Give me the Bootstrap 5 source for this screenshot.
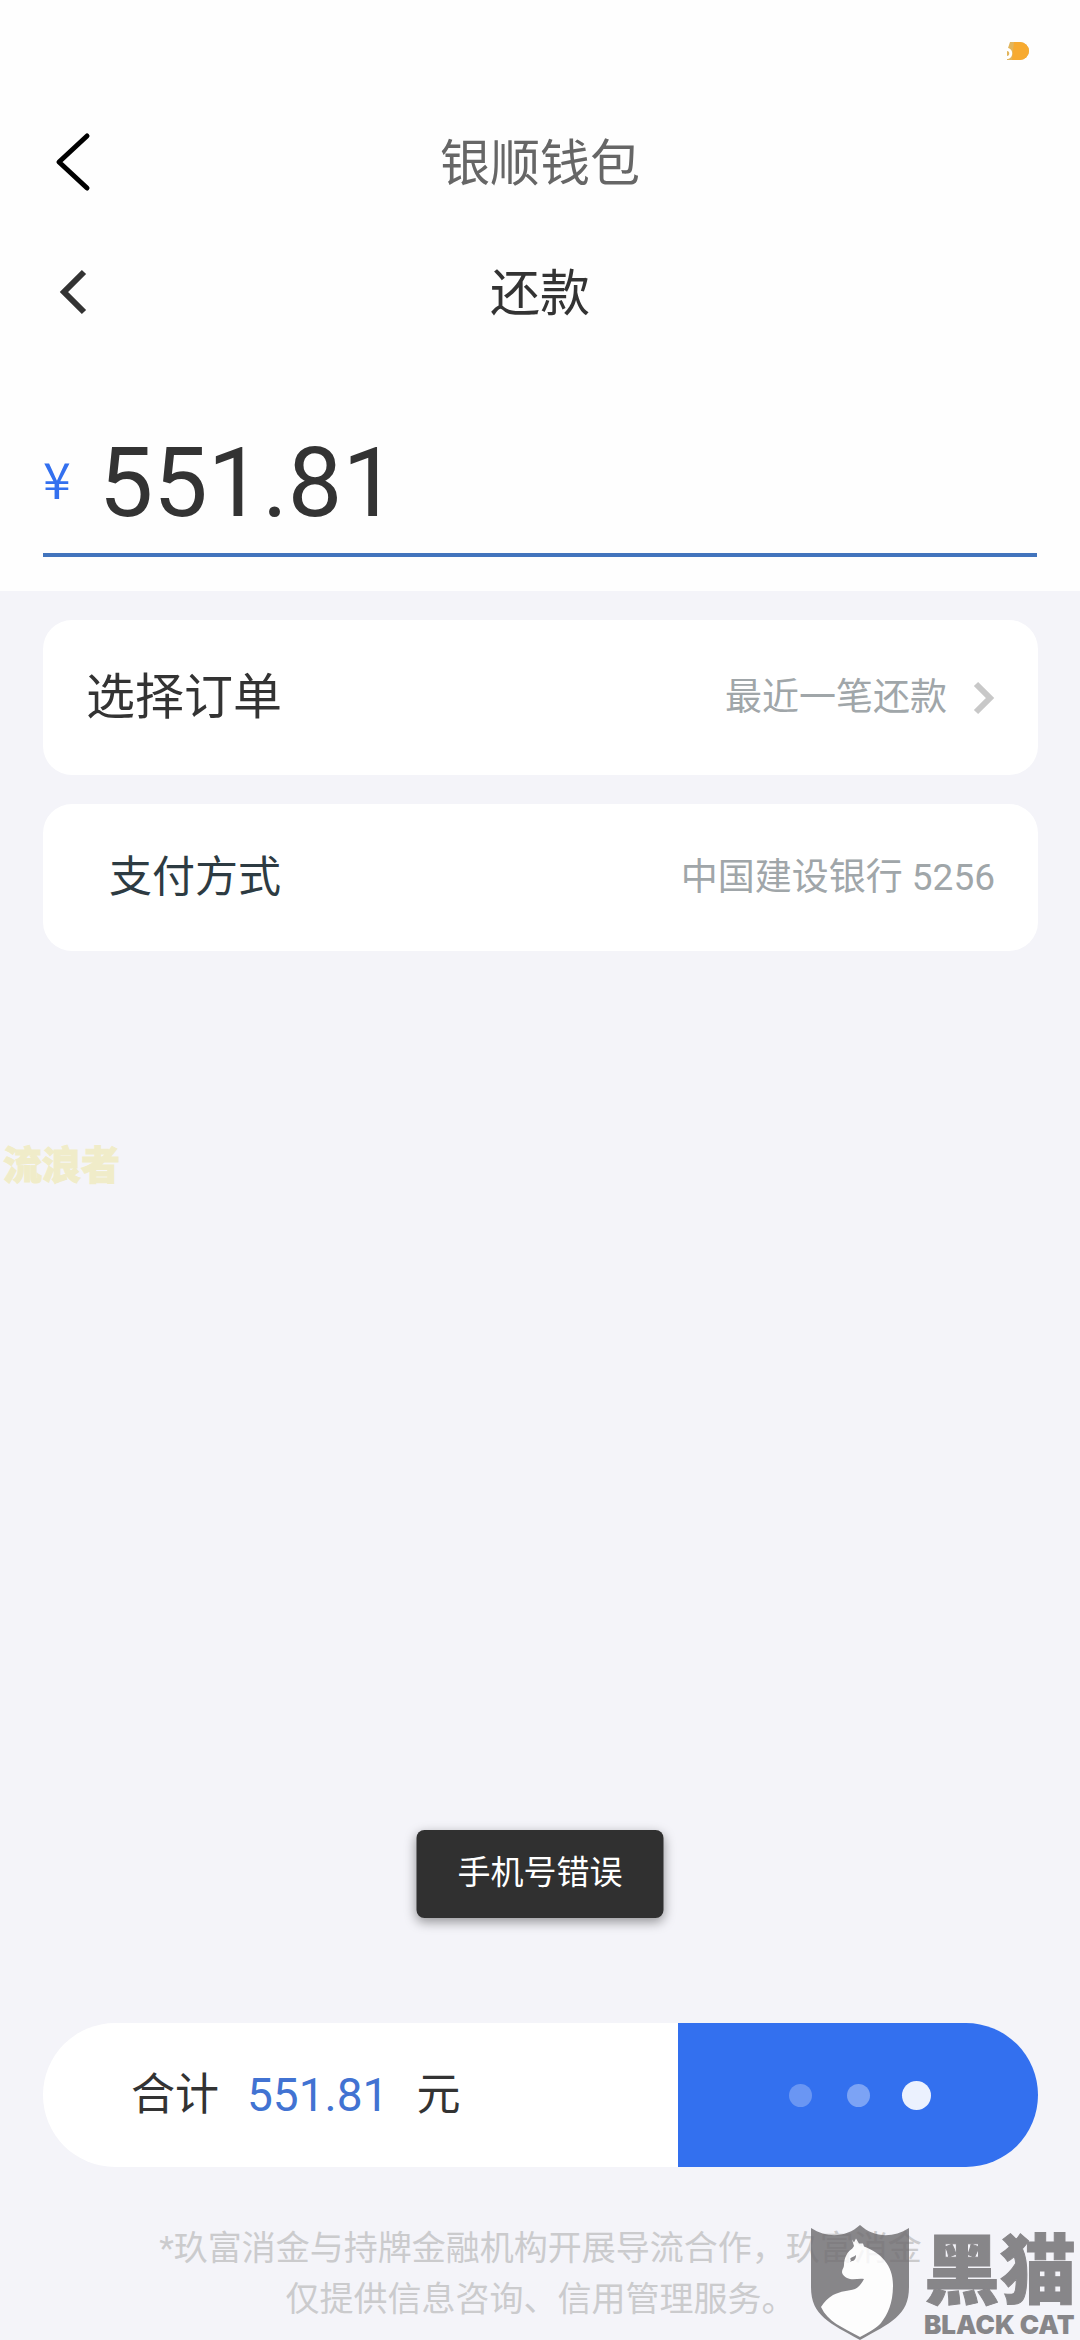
<!DOCTYPE html>
<html lang="zh-CN">
<head>
<meta charset="utf-8">
<meta name="viewport" content="width=device-width, initial-scale=1">
<title>还款</title>
<link href="https://cdn.jsdelivr.net/npm/bootstrap@5.3.0/dist/css/bootstrap.min.css" rel="stylesheet">
<style>
  :root { --brand: #3370ef; --ink: #333; --muted: #a0a6a9; --page: #f4f4f9; --gutter: 43px; }
  body { font-family: Roboto, "Noto Sans CJK SC", sans-serif; color: var(--ink); background: var(--page); line-height: 1.5; }
  .top-area { background: #fefefe; }
  .status-strip { height: 92px; padding: 10px 51px 0 0; }
  .app-bar { display: grid; grid-template-columns: 1fr auto 1fr; align-items: center; padding: 0 var(--gutter); }
  .app-bar-outer { height: 140px; color: #666; }
  .app-bar-inner { height: 120px; }
  .app-bar h1, .app-bar h2 { font-size: 50px; line-height: 60px; font-weight: 400; margin: 0; padding-top: 4px; }
  .back-btn { border: 0; background: none; padding: 0 0 0 12px; justify-self: start; display: flex; }
  .amount-area { padding: 59px var(--gutter) 34px; }
  .amount-field { height: 146px; border-bottom: 4px solid #4274bd; gap: 28px; }
  .amount-field label { font-family: "Noto Sans CJK SC", sans-serif; font-size: 50px; line-height: 60px; padding-bottom: 10px; color: var(--brand); }
  .amount-field input { font-size: 97px; line-height: 120px; height: 122px; color: var(--ink); border: 0; padding: 2px 0 0; background: none; min-width: 0; outline: 0; }
  .content-area { padding: 29px 42px 0 var(--gutter); gap: 29px; }
  .option-row { background: #fff; border: 0; border-radius: 29px; padding: 0 43px; color: var(--ink); text-align: left; }
  .option-order { height: 155px; font-size: 49px; }
  .option-pay { height: 147px; font-size: 43px; color: #2d3b42; padding-left: 66px; }
  .option-value { font-size: 37px; color: var(--muted); gap: 26px; }
  .stamp { left: 3px; top: 545px; font-size: 39px; line-height: 60px; font-weight: 900; color: #f0ecc9; text-shadow: 0 0 2px #fff; -webkit-text-stroke: 1px #f0ecc9; }
  .notice { left: 50%; bottom: 422px; transform: translateX(-50%); background: #303030; color: #fff; font-size: 33px; line-height: 50px; padding: 18px 41px 20px; border-radius: 8px; box-shadow: 0 4px 12px rgba(0,0,0,.4); white-space: nowrap; }
  .pay-area { padding: 0 42px 15px var(--gutter); }
  .pay-bar { height: 144px; border-radius: 72px; background: #fff; overflow: hidden; }
  .pay-total { font-size: 44px; padding-left: 88px; gap: 28px; }
  .pay-total output { font-size: 46px; color: #4273d2; }
  .pay-btn { width: 360px; border: 0; background: var(--brand); gap: 29px; }
  .load-dot { width: 23px; height: 23px; margin: 0 3px; border-radius: 50%; background: #fff; opacity: .27; }
  .load-dot:nth-child(2) { opacity: .36; }
  .load-dot:last-child { width: 29px; height: 29px; margin: 0; opacity: .9; }
  .legal { margin: 56px 0 0; font-size: 34px; line-height: 51px; color: #cbcbcd; }
  .brand-stamp { right: 2px; bottom: 0; gap: 15px; opacity: .82; color: #706e71; }
  .brand-words { width: 154px; }
  .brand-cn { font-size: 76px; line-height: 76px; font-weight: 900; -webkit-text-stroke: 1px #706e71; }
  .brand-en { font-family: Inter, sans-serif; font-size: 26px; line-height: 30px; font-weight: 900; white-space: nowrap; }
</style>
</head>
<body>
<div class="min-vh-100 d-flex flex-column position-relative">
  <div class="top-area">
    <div class="status-strip d-flex justify-content-end align-items-center">
      <svg width="22" height="18" viewBox="0 0 22 18" aria-hidden="true">
        <path d="M0 0h13a9 9 0 0 1 0 18H0z" fill="#e2b55c"/>
        <path d="M7 0h6a9 9 0 0 1 0 18H5z" fill="#f7aa30"/>
        <path d="M0 0h3L1 6H0zM0 6c7 0 7 11 0 11v-3c3 0 3-5 0-5z" fill="#fff"/>
      </svg>
    </div>
    <header class="app-bar app-bar-outer">
      <button class="back-btn" type="button" aria-label="返回钱包">
        <svg width="36" height="60" viewBox="0 0 36 60" fill="none" stroke="#000" stroke-width="5" stroke-linecap="round" stroke-linejoin="round"><path d="M32 4 4 30l28 26"/></svg>
      </button>
      <h1>银顺钱包</h1>
    </header>
    <header class="app-bar app-bar-inner">
      <button class="back-btn" type="button" aria-label="返回">
        <svg width="36" height="46" viewBox="0 0 36 46" fill="none" stroke="#333" stroke-width="6"><path d="M29 3 9 23l20 20"/></svg>
      </button>
      <h2>还款</h2>
    </header>
    <section class="amount-area">
      <div class="amount-field d-flex align-items-center">
        <label for="amount">¥</label>
        <input class="flex-grow-1" id="amount" type="text" inputmode="decimal" value="551.81">
      </div>
    </section>
  </div>

  <main class="content-area d-flex flex-column flex-grow-1 position-relative">
    <button class="option-row option-order d-flex justify-content-between align-items-center" type="button">
      <span>选择订单</span>
      <span class="option-value d-flex align-items-center">最近一笔还款
        <svg width="22" height="34" viewBox="0 0 22 34" fill="none" stroke="#c8c8c8" stroke-width="6" aria-hidden="true"><path d="m3 3 14 14L3 31"/></svg>
      </span>
    </button>
    <div class="option-row option-pay d-flex justify-content-between align-items-center">
      <span>支付方式</span>
      <span class="option-value">中国建设银行 5256</span>
    </div>
    <div class="stamp position-absolute">流浪者</div>
  </main>

  <footer class="pay-area">
    <div class="pay-bar d-flex">
      <div class="pay-total d-flex align-items-center flex-grow-1">
        <span>合计</span><output for="amount">551.81</output><span>元</span>
      </div>
      <button class="pay-btn d-flex align-items-center justify-content-center" type="button" aria-label="还款中">
        <span class="load-dot"></span><span class="load-dot"></span><span class="load-dot"></span>
      </button>
    </div>
    <p class="legal text-center">*玖富消金与持牌金融机构开展导流合作，玖富消金<br>仅提供信息咨询、信用管理服务。</p>
  </footer>

  <div class="notice position-absolute" role="alert">手机号错误</div>

  <div class="brand-stamp position-absolute d-flex align-items-end">
    <svg width="98" height="115" viewBox="0 0 98 115" aria-hidden="true">
      <path d="M0 3c17 11 36 9 49-3 13 12 32 14 49 3v59c0 29-19 36-49 53C19 98 0 91 0 62z" fill="#706e71"/>
      <path d="M41 14.500l2 3 2-4 3 5 4 0 1 3C70 28 82 40 82 60c0 18-5 29-12 38-4 5-12 9-21 14C31 102 17 97 10 82c3-5 7-9 12-12 8-4 15-4 22-6 4-2 7-6 9-10-5-1-9 1-14 0-4-1-8-4-8-7 0-3 2-4 2-7 0-4 1-8 3-11 2-4 5-4 7-8z" fill="#fff"/>
      <path d="M39 34c1-2 4-2 6-4 0 4-2 6-4 6l-2 1 1-2z" fill="#706e71"/>
    </svg>
    <div class="brand-words">
      <div class="brand-cn">黑猫</div>
      <div class="brand-en">BLACK CAT</div>
    </div>
  </div>
</div>
<script src="https://cdn.jsdelivr.net/npm/bootstrap@5.3.0/dist/js/bootstrap.bundle.min.js"></script>
</body>
</html>
